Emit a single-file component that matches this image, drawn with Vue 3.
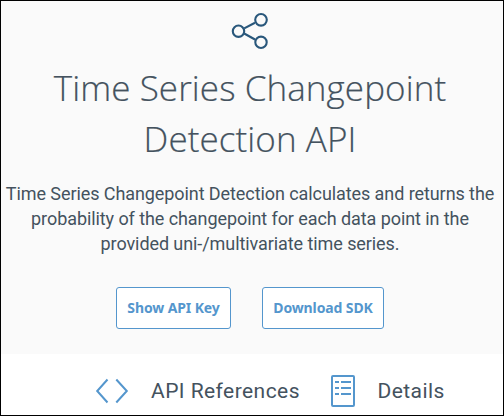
<script setup>
const titleLines = ['Time Series Changepoint', 'Detection API']
const descriptionLines = [
  'Time Series Changepoint Detection calculates and returns the',
  'probability of the changepoint for each data point in the',
  'provided uni-/multivariate time series.',
]
</script>

<template>
  <main class="page">
    <header class="hero">
      <svg class="share" width="38" height="38" viewBox="0 0 38 38" aria-hidden="true">
        <path d="M13.2 16.4 L24 10.7 M13.2 21.5 L24 27.5" />
        <circle cx="7.5" cy="19.2" r="5.7" />
        <circle cx="30" cy="7.8" r="5.8" />
        <circle cx="30" cy="30.3" r="5.7" />
      </svg>
      <h1 class="title">
        <span v-for="line in titleLines" :key="line" class="line">{{ line }}</span>
      </h1>
      <p class="description">
        <span v-for="line in descriptionLines" :key="line" class="line">{{ line }}</span>
      </p>
      <div class="actions">
        <button class="button key" type="button">Show API Key</button>
        <button class="button sdk" type="button">Download SDK</button>
      </div>
    </header>
    <nav class="tabs">
      <a class="tab references">
        <svg width="34" height="26" viewBox="0 0 34 26" aria-hidden="true">
          <path d="M12.5 1.5 L2.2 13 L12.5 24.5 M21.3 1.5 L31.8 13 L21.3 24.5" />
        </svg>
        <span>API References</span>
      </a>
      <a class="tab details">
        <svg width="24" height="32" viewBox="0 0 24 32" aria-hidden="true">
          <rect x="1" y="1" width="22" height="30" rx="1" />
          <path d="M4 7h4M10 7h10M4 13h4M10 13h10M4 19h4M10 19h10" />
        </svg>
        <span>Details</span>
      </a>
    </nav>
  </main>
</template>

<style>
body {
  margin: 0;
}
</style>

<style scoped>
.page {
  box-sizing: border-box;
  width: 504px;
  height: 416px;
  overflow: hidden;
  border: 1px solid #000;
  background: #fff;
  color: #44525e;
  font-family: Roboto, sans-serif;
}
.hero {
  box-sizing: border-box;
  height: 353px;
  padding: 11px 4px 0 0;
  display: flex;
  flex-direction: column;
  align-items: center;
  background: #fafafa;
}
.share {
  flex: none;
  fill: none;
  stroke: #29577b;
  stroke-width: 2.1;
}
.line {
  display: block;
  white-space: nowrap;
}
.title {
  margin: 12px 0 0;
  display: flex;
  flex-direction: column;
  align-items: center;
  font-family: "Open Sans", sans-serif;
  font-size: 35px;
  font-weight: 300;
  line-height: 51px;
  letter-spacing: 0.08px;
  -webkit-text-stroke: 0.2px #44525e;
}
.description {
  margin: 17px 0 0;
  display: flex;
  flex-direction: column;
  align-items: center;
  font-size: 18px;
  line-height: 25px;
  letter-spacing: -0.08px;
}
.actions {
  margin-top: 31px;
  display: flex;
  gap: 31px;
}
.button {
  box-sizing: border-box;
  height: 42px;
  padding: 0;
  border: 1px solid #5496cd;
  border-radius: 3px;
  background: #fff;
  color: #5496cd;
  font: 700 14px/40px "Noto Sans", sans-serif;
  letter-spacing: -0.12px;
}
.key {
  width: 115px;
}
.sdk {
  width: 122px;
}
.tabs {
  height: 61px;
  padding: 13px 0 0 94px;
  box-sizing: border-box;
  display: flex;
  align-items: center;
  gap: 31px;
  font-size: 21px;
  letter-spacing: 0.44px;
}
.tab {
  display: flex;
  align-items: center;
  gap: 22px;
}
.details {
  gap: 22.5px;
}
.tab svg {
  flex: none;
  fill: none;
  stroke: #5496cd;
  stroke-width: 2;
}
.tab span {
  white-space: nowrap;
}
</style>
